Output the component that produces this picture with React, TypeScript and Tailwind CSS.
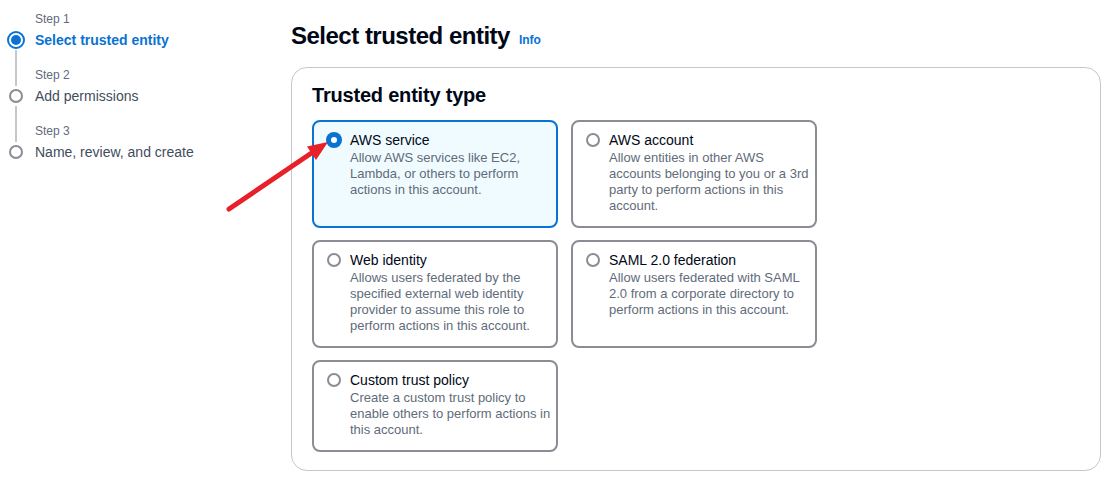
import React from "react";

const steps = [
  { label: "Step 1", title: "Select trusted entity", active: true },
  { label: "Step 2", title: "Add permissions", active: false },
  { label: "Step 3", title: "Name, review, and create", active: false },
];

const options = [
  {
    title: "AWS service",
    lines: ["Allow AWS services like EC2,", "Lambda, or others to perform", "actions in this account."],
    selected: true,
  },
  {
    title: "AWS account",
    lines: ["Allow entities in other AWS", "accounts belonging to you or a 3rd", "party to perform actions in this", "account."],
  },
  {
    title: "Web identity",
    lines: ["Allows users federated by the", "specified external web identity", "provider to assume this role to", "perform actions in this account."],
  },
  {
    title: "SAML 2.0 federation",
    lines: ["Allow users federated with SAML", "2.0 from a corporate directory to", "perform actions in this account."],
  },
  {
    title: "Custom trust policy",
    lines: ["Create a custom trust policy to", "enable others to perform actions in", "this account."],
  },
];

function Radio({ checked }: { checked?: boolean }) {
  if (checked) {
    return (
      <span className="-mx-px flex h-4 w-4 items-center justify-center rounded-full bg-[#0972d3]">
        <span className="h-[6px] w-[6px] rounded-full bg-white" />
      </span>
    );
  }
  return <span className="h-[14px] w-[14px] rounded-full border-2 border-[#8c8c94] bg-white" />;
}

function Sidebar() {
  return (
    <nav className="w-[291px] shrink-0 pl-[7px] pt-[11px]">
      {steps.map((s, i) => (
        <div key={s.label}>
          <div className="flex">
            <div className="flex w-[18px] justify-center">
              {i > 0 && <span className="w-[2px] bg-[#c6c6cd]" />}
            </div>
            <div className={`pl-[10px] text-[12px] leading-4 text-[#5f6b7a] ${i > 0 ? "pt-[17px]" : ""}`}>
              {s.label}
            </div>
          </div>
          <div className="flex h-[3px] w-[18px] justify-center">
            {i > 0 && <span className="w-[2px] bg-[#c6c6cd]" />}
          </div>
          <div className="flex items-center">
            <div className="flex h-5 w-[18px] items-center justify-center">
              {s.active ? (
                <span className="flex h-[18px] w-[18px] items-center justify-center rounded-full border-2 border-[#0972d3] bg-white">
                  <span className="h-[10px] w-[10px] rounded-full bg-[#0972d3]" />
                </span>
              ) : (
                <span className="h-[14px] w-[14px] rounded-full border-2 border-[#8c8c94]" />
              )}
            </div>
            <span
              className={`pl-[10px] text-[14px] leading-5 ${
                s.active ? "font-bold text-[#0972d3]" : "text-[#414d5c]"
              }`}
            >
              {s.title}
            </span>
          </div>
        </div>
      ))}
    </nav>
  );
}

function OptionCard({ title, lines, selected }: { title: string; lines: string[]; selected?: boolean }) {
  return (
    <div
      className={`flex items-start rounded-lg border-2 pt-2 pb-3 pl-[13px] pr-1 ${
        selected ? "border-[#0972d3] bg-[#f0fbff]" : "border-[#8c8c94] bg-white"
      }`}
    >
      <div className="flex h-5 items-center">
        <Radio checked={selected} />
      </div>
      <div className="pl-[9px]">
        <div className="text-[14px] leading-5 text-[#000716]">{title}</div>
        <p className="text-[13px] leading-4 whitespace-nowrap text-[#5f6b7a]">
          {lines.map((l, i) => (
            <React.Fragment key={i}>
              {l}
              {i < lines.length - 1 && <br />}
            </React.Fragment>
          ))}
        </p>
      </div>
    </div>
  );
}

export default function App() {
  return (
    <div
      className="relative flex h-[486px] w-[1110px] overflow-hidden bg-white"
      style={{ fontFamily: '"Liberation Sans", Arial, sans-serif' }}
    >
      <Sidebar />

      <main className="w-[810px] pt-[21px]">
        <div className="flex items-baseline gap-[9px]">
          <h1 className="text-[24px] leading-[30px] font-bold tracking-[-0.5px] text-[#000716]">
            Select trusted entity
          </h1>
          <a className="text-[12px] font-bold text-[#0972d3]">Info</a>
        </div>

        <section className="mt-[16px] h-[404px] rounded-2xl border border-[#c6c6cd] pt-[15px] pl-5">
          <h2 className="text-[20px] leading-6 font-bold tracking-[-0.2px] text-[#000716]">Trusted entity type</h2>
          <div className="mt-[13px] grid grid-cols-[246px_246px] gap-x-[13px] gap-y-3">
            {options.map((o) => (
              <OptionCard key={o.title} {...o} />
            ))}
          </div>
        </section>
      </main>

      {/* red annotation arrow */}
      <svg className="pointer-events-none absolute inset-0" width="1110" height="486">
        <line x1="229" y1="209" x2="313" y2="152" stroke="#e8202a" strokeWidth="5" strokeLinecap="round" />
        <polygon points="328,142 307,146.6 316,160" fill="#e8202a" />
      </svg>
    </div>
  );
}
